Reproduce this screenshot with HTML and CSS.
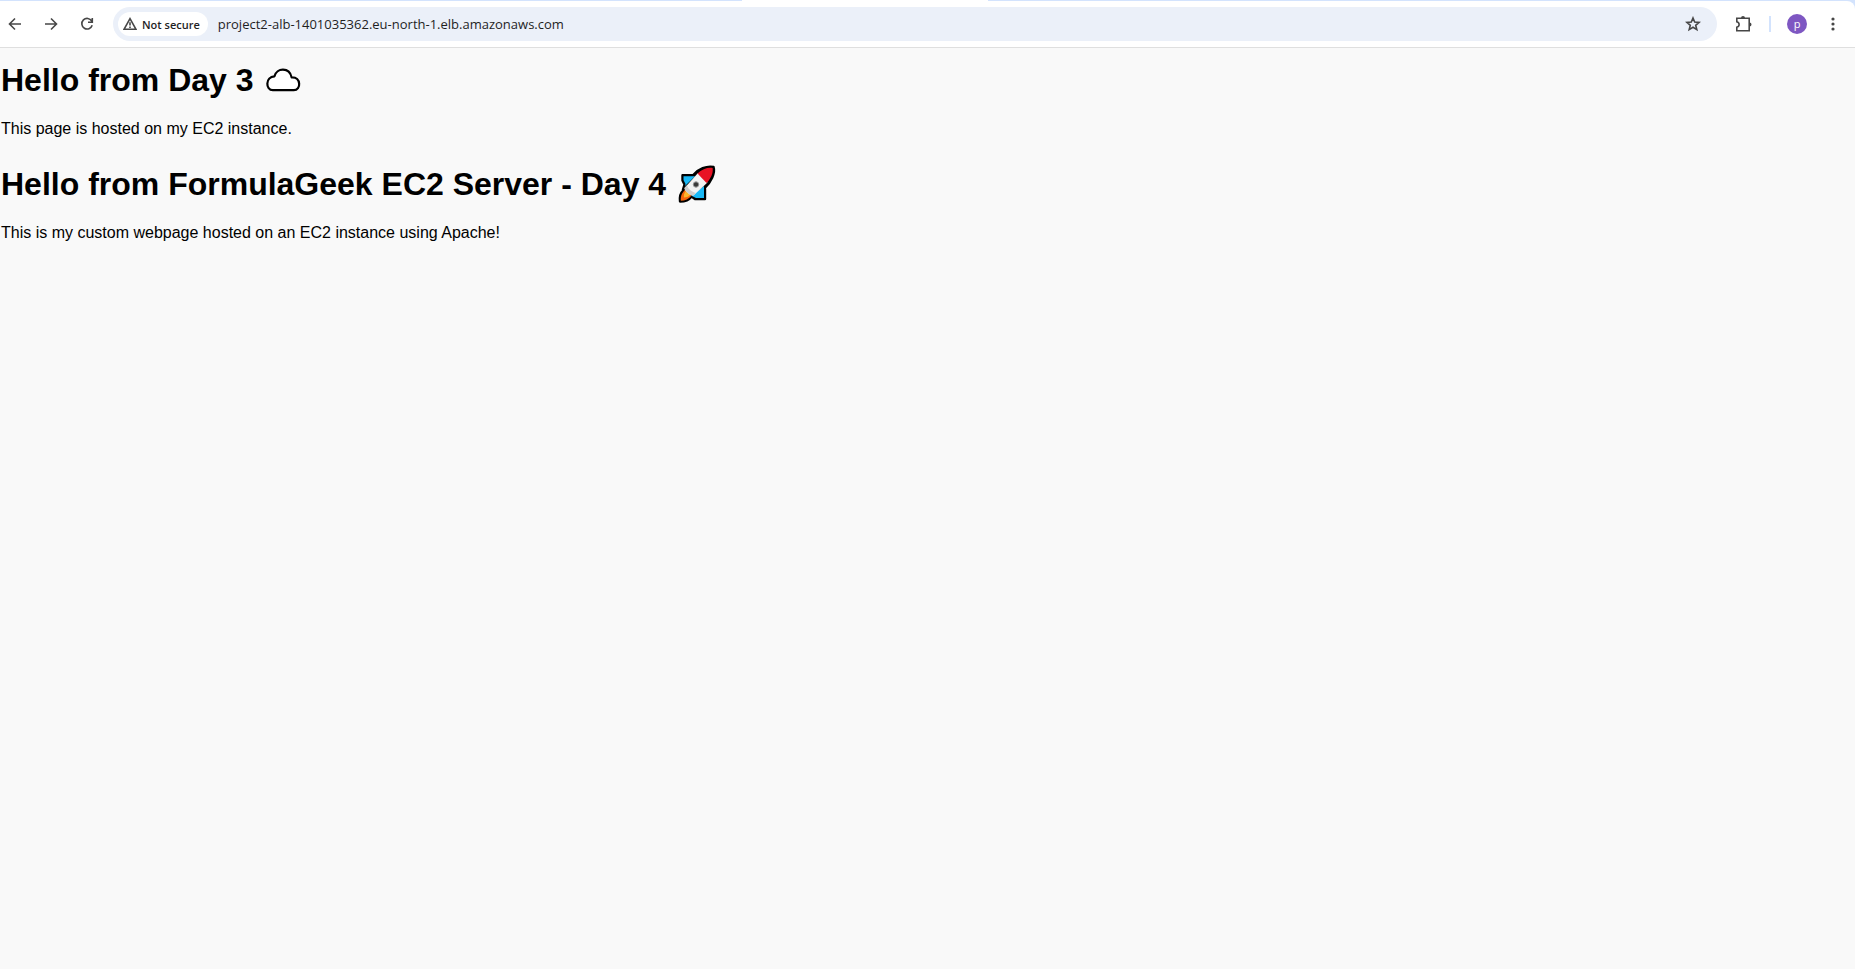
FILE: index.html
```html
<!DOCTYPE html>
<html lang="en">
<head>
<meta charset="utf-8">
<title>project2-alb</title>
<link rel="stylesheet" href="styles.css">
</head>
<body>
<div class="tab-strip"><span class="active-tab"></span></div>
<header class="toolbar">
  <nav class="nav">
    <button class="icon-btn back" aria-label="Back"><svg width="16" height="16" viewBox="0 0 16 16"><path d="M14 8H3M8 2.500L2.500 8L8 13.500"/></svg></button>
    <button class="icon-btn" aria-label="Forward"><svg width="16" height="16" viewBox="0 0 16 16"><path d="M2 8H13M8 2.500L13.500 8L8 13.500"/></svg></button>
    <button class="icon-btn" aria-label="Reload"><svg width="16" height="16" viewBox="0 0 16 16"><path d="M12.700 5A5.300 5.300 0 1 0 13.200 9.300M13.300 2V6.200H9"/></svg></button>
  </nav>
  <div class="omnibox">
    <button class="chip"><svg width="14" height="14" viewBox="0 0 14 14"><path d="M7 1.700L13 12.300H1ZM7 5.300V8.600M7 9.500V11"/></svg>Not secure</button>
    <input class="url" type="text" aria-label="Address" value="project2-alb-1401035362.eu-north-1.elb.amazonaws.com">
    <button class="star" aria-label="Bookmark"><svg width="16" height="16" viewBox="0 0 16 16"><path d="M8 2L9.700 6.100L14.100 6.400L10.700 9.300L11.800 13.600L8 11.300L4.200 13.600L5.300 9.300L1.900 6.400L6.300 6.100Z"/></svg></button>
  </div>
  <div class="actions">
    <button class="icon-btn" aria-label="Extensions"><svg width="18" height="18" viewBox="0 0 18 18"><path d="M2.800 3.200H15.200V15.800H2.800V12.200C5.900 11.500 5.900 7.500 2.800 6.800Z"/><path class="solid" d="M7 3A2 2 0 0 1 11 3ZM15.500 7.500A2 2 0 0 1 15.500 11.500Z"/></svg></button>
    <span class="divider"></span>
    <button class="avatar" aria-label="Profile">p</button>
    <button class="icon-btn" aria-label="Menu"><svg width="16" height="16" viewBox="0 0 16 16"><g class="solid"><circle cx="8" cy="3" r="1.600"/><circle cx="8" cy="8" r="1.600"/><circle cx="8" cy="13" r="1.600"/></g></svg></button>
  </div>
</header>
<main class="page">
  <h1 class="title">Hello from Day 3 <svg class="emoji" role="img" aria-label="cloud" viewBox="0 3 44 38"><path d="M10.800 32.200C3.500 32.200 3 18.800 12.500 18.300C14.500 9.500 27.500 9 29.600 19.400C39.300 18.800 39.300 32.200 31.800 32.200Z" fill="#fff" stroke="#000" stroke-width="2.200" stroke-linejoin="round"/></svg></h1>
  <p class="text">This page is hosted on my EC2 instance.</p>
  <h1 class="title">Hello from FormulaGeek EC2 Server - Day 4 <svg class="emoji" role="img" aria-label="rocket" viewBox="0 3 44 38">
    <path d="M7.500 13.200H18C23 7 32 3.500 38.500 5C40.500 11 36 20 30 25.500V37H20L16.500 34.500C14 38 9.500 39.500 5 39.500C4.500 34.500 5 31.500 8 29V27.500L9.500 22.500L7.500 18.500Z" fill="#000" stroke="#000" stroke-width="2.400" stroke-linejoin="round"/>
    <path d="M8.500 14.200H20L10 24L10.500 22L8.500 18ZM29 24V36H21L16 33.500Z" fill="#19b8f5"/>
    <path d="M10.500 27.500C6.500 31 5.500 34.500 5.800 38.700C10 38.700 14 37 16.500 33.500Z" fill="#f7630c"/>
    <path d="M11 29C9 31 8.500 33.500 9 35.500C12 35.500 14 34.500 15.500 32.500Z" fill="#ffb52b"/>
    <path d="M9.500 26L23 11L32.500 20.500L18.500 33.500C15.500 34 9.500 29 9.500 26Z" fill="#f2f2f2"/>
    <path d="M9.500 26L12 23.300C13 27 16.500 30 21 31L18.500 33.500C15.500 34 9.500 29 9.500 26Z" fill="#ccc"/>
    <path d="M22.500 11.500C27 7 33 5.200 37.600 6C38.500 11 35.500 17 31.500 21Z" fill="#e81224"/>
    <circle cx="21" cy="22.500" r="2.700" fill="#383838" stroke="#999" stroke-width="1"/></svg></h1>
  <p class="text">This is my custom webpage hosted on an EC2 instance using Apache!</p>
</main>
</body>
</html>
```
FILE: styles.css
```css
* { box-sizing: border-box; }
body {
  margin: 0;
  min-height: 100vh;
  background: #f9f9f9;
  color: #000;
  font-family: "Liberation Sans", Arial, sans-serif;
}
button { border: 0; padding: 0; background: none; font: inherit; }
svg { flex: none; }
.tab-strip { height: 1px; padding-left: 40%; background: #d3e3fd; }
.active-tab { display: block; width: 246px; height: 1px; background: #fff; }
.toolbar {
  display: flex;
  align-items: center;
  gap: 8px;
  height: 47px;
  padding-right: 4px;
  background: #fff;
  border-bottom: 1px solid #dfdfdf;
  border-top-right-radius: 8px;
  box-shadow: 4px -4px 0 #d3e3fd;
  clip-path: inset(0);
  font-family: "Open Sans", "Noto Sans", sans-serif;
}
.nav, .actions { display: flex; align-items: center; }
.icon-btn {
  display: flex;
  align-items: center;
  justify-content: center;
  width: 36px;
  height: 34px;
}
.back { width: 30px; margin-right: 3px; }
.toolbar svg { fill: none; stroke: #474747; stroke-width: 1.600; }
.toolbar .solid { fill: #474747; stroke: none; }
.omnibox {
  display: flex;
  flex: 1;
  align-items: center;
  height: 34px;
  padding: 0 16px 0 5px;
  background: #ebf0f9;
  border-radius: 17px;
}
.chip {
  display: flex;
  align-items: center;
  gap: 5px;
  height: 24px;
  padding: 0 8px 0 5px;
  border-radius: 12px;
  background: #fff;
  color: #1f1f1f;
  font-size: 11px;
  font-weight: 600;
}
.url {
  flex: 1;
  border: 0;
  padding: 0;
  margin-left: 10px;
  background: none;
  color: #1f1f1f;
  font-family: inherit;
  font-size: 13px;
}
.star { display: flex; }
.actions { gap: 8px; }
.divider { width: 2px; height: 16px; background: #d3e3fd; }
.avatar {
  width: 20px;
  height: 20px;
  margin-left: 8px;
  border-radius: 50%;
  background: #7e57c2;
  color: #fff;
  font-size: 11px;
  line-height: 18px;
}
.page { padding: 12px 1px; }
.title {
  margin: 0 0 20px;
  font-size: 32px;
  font-weight: 700;
  line-height: 40px;
}
.text { margin: 0 0 26px; font-size: 16px; line-height: 18px; }
.emoji { width: 44px; height: 38px; vertical-align: -8px; overflow: visible; }
```
